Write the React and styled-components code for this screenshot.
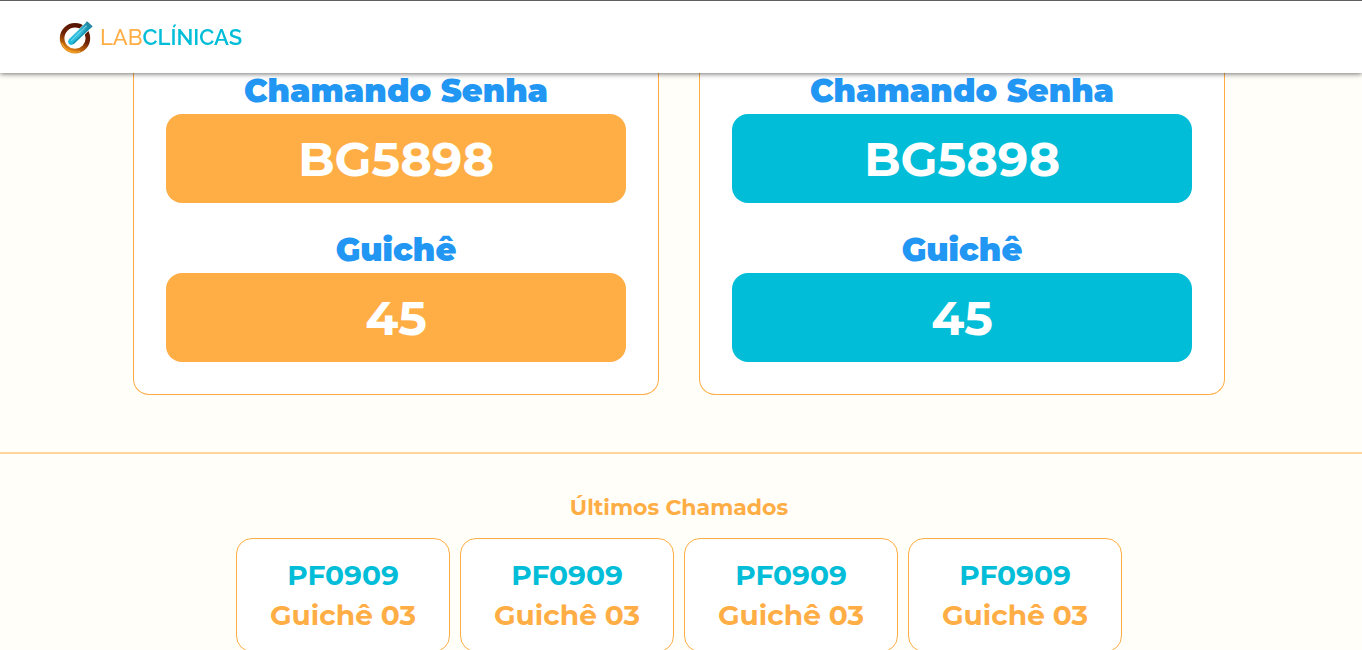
import React from "react";
import styled, { createGlobalStyle } from "styled-components";

const ORANGE = "#ffad45";
const CYAN = "#02bdd8";
const BLUE = "#2196f3";

const GlobalStyle = createGlobalStyle`
  *, *::before, *::after { box-sizing: border-box; }
  body {
    margin: 0;
    background: #fffef9;
    font-family: Montserrat, Inter, sans-serif;
  }
  h1, h2, p, ul { margin: 0; padding: 0; }
`;

const Page = styled.div`
  height: 100vh;
  overflow-y: auto;
  scrollbar-width: none;
`;

const Header = styled.header`
  position: sticky;
  top: 0;
  z-index: 1;
  display: flex;
  align-items: center;
  height: 73px;
  padding: 0 59px;
  border-top: 1px solid #5f5f64;
  background: #fff;
  box-shadow: 0 1px 5px rgba(0, 0, 0, 0.55);
`;

const Brand = styled.a`
  display: flex;
  align-items: center;
  gap: 7px;
  color: ${CYAN};
  font-family: Raleway, Lato, sans-serif;
  font-size: 22px;
  font-weight: 600;
  line-height: 32px;
  text-decoration: none;
`;

const BrandLight = styled.span`
  color: ${ORANGE};
  font-weight: 500;
`;

const Calling = styled.section`
  display: flex;
  justify-content: center;
  gap: 40px;
  padding: 0 137px 57px 133px;
  border-bottom: 2px solid #ffd59c;
`;

const Panel = styled.article`
  flex: 1;
  max-width: 527px;
  padding: 0 32px 32px;
  border: 1px solid ${ORANGE};
  border-top: 0;
  border-radius: 0 0 16px 16px;
  background: #fff;
  text-align: center;
`;

const PanelTitle = styled.h2`
  padding-bottom: 5px;
  color: ${BLUE};
  font-size: 32px;
  font-weight: 900;
  line-height: 36px;

  & ~ & { padding-top: 29px; }
`;

const Display = styled.p`
  padding-top: 1px;
  border-radius: 16px;
  background: ${(p) => p.$tone};
  color: #fff;
  font-size: 48px;
  font-weight: 700;
  line-height: 88px;
`;

const Recent = styled.section`
  padding: 38px 4px 16px 0;
  text-align: center;
`;

const RecentTitle = styled.h2`
  color: ${ORANGE};
  font-size: 22px;
  font-weight: 700;
  line-height: 32px;
`;

const RecentList = styled.ul`
  display: flex;
  justify-content: center;
  gap: 10px;
  margin-top: 14px;
  list-style: none;
`;

const RecentCard = styled.li`
  width: 214px;
  padding: 16px;
  border: 1px solid ${ORANGE};
  border-radius: 16px;
  background: #fff;
`;

const RecentLine = styled.p`
  color: ${(p) => p.$tone};
  font-size: 28px;
  font-weight: 700;
  line-height: 40px;
  white-space: nowrap;
`;

const LogoMark = () => (
  <svg width="34" height="33" viewBox="0 0 34 33" aria-hidden="true">
    <defs>
      <linearGradient id="ring" x1="0.7" y1="0" x2="0.3" y2="1">
        <stop offset="0" stopColor="#561403" />
        <stop offset="0.5" stopColor="#702304" />
        <stop offset="0.8" stopColor="#b9600b" />
        <stop offset="1" stopColor="#e8901a" />
      </linearGradient>
      <linearGradient id="tube" x1="0" y1="1" x2="1" y2="0">
        <stop offset="0" stopColor="#18b8dc" />
        <stop offset="0.5" stopColor="#35bfdd" />
        <stop offset="1" stopColor="#127994" />
      </linearGradient>
    </defs>
    <circle cx="16" cy="17.2" r="12.9" fill="none" stroke="url(#ring)" strokeWidth="4.6" />
    <path d="M2.8 22A14 14 0 0 0 21 30.2" fill="none" stroke="#f0a030" strokeWidth="1.2" />
    <path d="M9.5 18.4 26 2 32 7.5 14.5 24.5Z" fill="#fff" />
    <path d="M27.2 1.4 32.4 6.4 15.2 22.8Q12.4 25 10 23 8.2 20.8 10.2 18Z" fill="url(#tube)" />
    <path d="M12 19.8 27.6 4.6" stroke="#6fd6ea" strokeWidth="1.1" />
    <path d="M14 22.6 30.8 6.4" stroke="#168aa8" strokeWidth="1.2" />
    <path d="M27.4 .8 33 6" stroke="#20839d" strokeWidth="1.8" />
  </svg>
);

const panels = [
  { tone: ORANGE, ticket: "BG5898", desk: "45" },
  { tone: CYAN, ticket: "BG5898", desk: "45" },
];

const recent = [1, 2, 3, 4].map((id) => ({ id, ticket: "PF0909", desk: "Guichê 03" }));

export default function App() {
  return (
    <>
      <GlobalStyle />
      <Page>
        <Header>
          <Brand href="#">
            <LogoMark />
            <span>
              <BrandLight>LAB</BrandLight>CLÍNICAS
            </span>
          </Brand>
        </Header>
        <main>
          <Calling>
            {panels.map((p) => (
              <Panel key={p.tone}>
                <PanelTitle>Chamando Senha</PanelTitle>
                <Display $tone={p.tone}>{p.ticket}</Display>
                <PanelTitle>Guichê</PanelTitle>
                <Display $tone={p.tone}>{p.desk}</Display>
              </Panel>
            ))}
          </Calling>
          <Recent>
            <RecentTitle>Últimos Chamados</RecentTitle>
            <RecentList>
              {recent.map((r) => (
                <RecentCard key={r.id}>
                  <RecentLine $tone={CYAN}>{r.ticket}</RecentLine>
                  <RecentLine $tone={ORANGE}>{r.desk}</RecentLine>
                </RecentCard>
              ))}
            </RecentList>
          </Recent>
        </main>
      </Page>
    </>
  );
}
